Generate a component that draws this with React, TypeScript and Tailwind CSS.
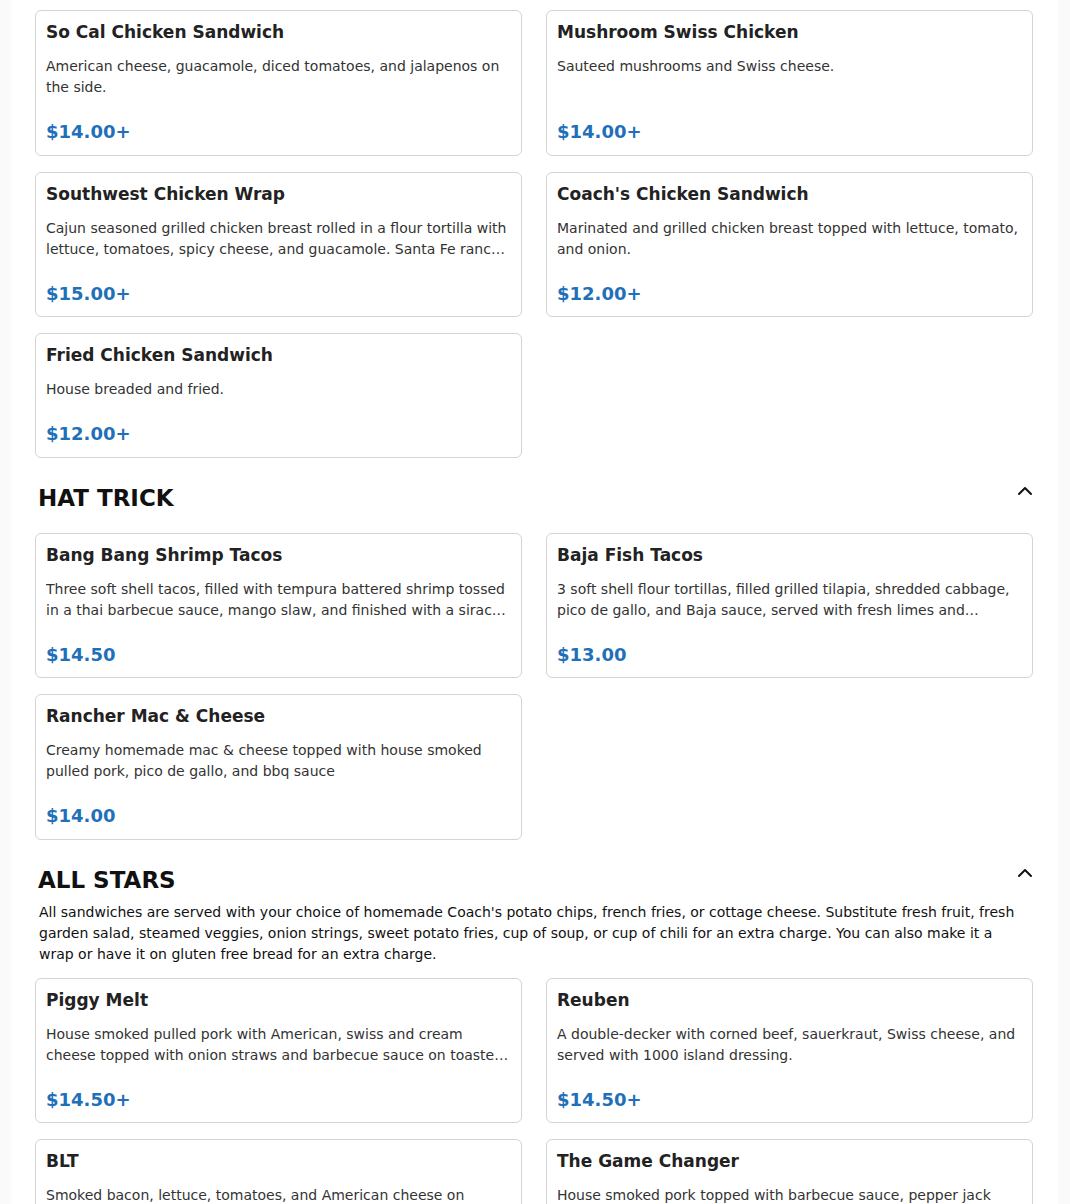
import { ChevronUp } from 'lucide-react';

type Item = {
  name: string;
  desc: string;
  price: string;
};

type Section = {
  title?: string;
  note?: string;
  items: Item[];
};

const SECTIONS: Section[] = [
  {
    items: [
      {
        name: 'So Cal Chicken Sandwich',
        desc: 'American cheese, guacamole, diced tomatoes, and jalapenos on the side.',
        price: '$14.00+',
      },
      {
        name: 'Mushroom Swiss Chicken',
        desc: 'Sauteed mushrooms and Swiss cheese.',
        price: '$14.00+',
      },
      {
        name: 'Southwest Chicken Wrap',
        desc: 'Cajun seasoned grilled chicken breast rolled in a flour tortilla with lettuce, tomatoes, spicy cheese, and guacamole. Santa Fe ranch dressing on the side.',
        price: '$15.00+',
      },
      {
        name: "Coach's Chicken Sandwich",
        desc: 'Marinated and grilled chicken breast topped with lettuce, tomato, and onion.',
        price: '$12.00+',
      },
      {
        name: 'Fried Chicken Sandwich',
        desc: 'House breaded and fried.',
        price: '$12.00+',
      },
    ],
  },
  {
    title: 'HAT TRICK',
    items: [
      {
        name: 'Bang Bang Shrimp Tacos',
        desc: 'Three soft shell tacos, filled with tempura battered shrimp tossed in a thai barbecue sauce, mango slaw, and finished with a siracha aioli.',
        price: '$14.50',
      },
      {
        name: 'Baja Fish Tacos',
        desc: '3 soft shell flour tortillas, filled grilled tilapia, shredded cabbage, pico de gallo, and Baja sauce, served with fresh limes and cilantro.',
        price: '$13.00',
      },
      {
        name: 'Rancher Mac & Cheese',
        desc: 'Creamy homemade mac & cheese topped with house smoked pulled pork, pico de gallo, and bbq sauce',
        price: '$14.00',
      },
    ],
  },
  {
    title: 'ALL STARS',
    note: "All sandwiches are served with your choice of homemade Coach's potato chips, french fries, or cottage cheese. Substitute fresh fruit, fresh garden salad, steamed veggies, onion strings, sweet potato fries, cup of soup, or cup of chili for an extra charge. You can also make it a wrap or have it on gluten free bread for an extra charge.",
    items: [
      {
        name: 'Piggy Melt',
        desc: 'House smoked pulled pork with American, swiss and cream cheese topped with onion straws and barbecue sauce on toasted sourdough.',
        price: '$14.50+',
      },
      {
        name: 'Reuben',
        desc: 'A double-decker with corned beef, sauerkraut, Swiss cheese, and served with 1000 island dressing.',
        price: '$14.50+',
      },
      {
        name: 'BLT',
        desc: 'Smoked bacon, lettuce, tomatoes, and American cheese on toasted sourdough.',
        price: '$12.00+',
      },
      {
        name: 'The Game Changer',
        desc: 'House smoked pork topped with barbecue sauce, pepper jack cheese, and onion straws.',
        price: '$14.50+',
      },
    ],
  },
];

function ItemCard({ item }: { item: Item }) {
  return (
    <div className="flex flex-col rounded-[6px] border border-[#d4d4d4] bg-white px-[10px] pt-[10px] pb-[10.5px]">
      <h3 className="text-[17px] leading-[23px] font-bold text-[#222]">
        {item.name}
      </h3>
      <p className="mt-[12px] line-clamp-2 text-[14px] leading-[21px] text-[#333]">
        {item.desc}
      </p>
      <p className="mt-auto pt-[22px] text-[18px] leading-[24px] font-bold text-[#1f70b8]">
        {item.price}
      </p>
    </div>
  );
}

export default function App() {
  return (
    <div
      className="min-h-screen bg-[#fafafa]"
      style={{ fontFamily: '"DejaVu Sans", Verdana, sans-serif' }}
    >
      <div className="ml-[11px] w-[1047px] bg-white pt-[10px] pr-[25px] pb-10 pl-6">
        {SECTIONS.map((s, i) => (
          <section key={i} className={i > 0 ? 'pt-6' : ''}>
            {s.title && (
              <div className={s.note ? '' : 'mb-[6px]'}>
                <div className="flex items-center justify-between pl-[3px]">
                  <h2 className="text-[23px] leading-[32px] font-bold text-[#111]">
                    {s.title}
                  </h2>
                  <ChevronUp
                    className="-mt-[14px] -mr-1 h-6 w-6 text-[#111]"
                    strokeWidth={2}
                  />
                </div>
                {s.note && (
                  <p className="mt-[6px] pr-4 pl-1 text-[14px] leading-[21px] text-[#111]">
                    {s.note}
                  </p>
                )}
              </div>
            )}
            <div
              className={`grid grid-cols-2 gap-x-6 gap-y-4 ${
                s.title ? 'pt-[13px]' : ''
              }`}
            >
              {s.items.map((it) => (
                <ItemCard key={it.name} item={it} />
              ))}
            </div>
          </section>
        ))}
      </div>
    </div>
  );
}
